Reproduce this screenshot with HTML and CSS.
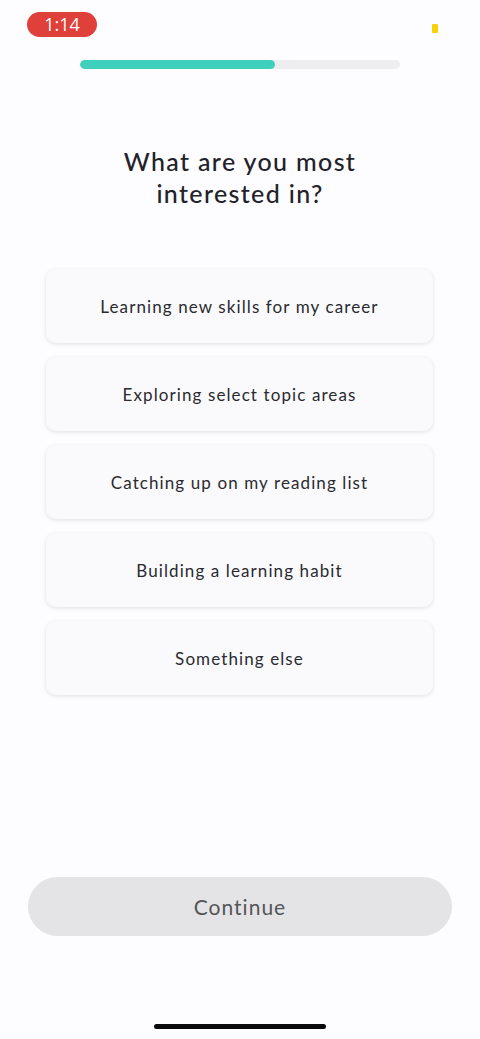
FILE: index.html
```html
<!DOCTYPE html>
<html>
<head>
<meta charset="utf-8">
<link rel="stylesheet" href="styles.css">
</head>
<body>
<div class="screen">
  <div class="status">
    <span class="time">1:14</span>
    <span class="dot"></span>
  </div>
  <div class="progress"><div class="fill" style="width:61%"></div></div>
  <h1 class="title">What are you most<br>interested in?</h1>
  <div class="options">
    <div class="card">Learning new skills for my career</div>
    <div class="card">Exploring select topic areas</div>
    <div class="card">Catching up on my reading list</div>
    <div class="card">Building a learning habit</div>
    <div class="card">Something else</div>
  </div>
  <div class="spacer"></div>
  <div class="cta">Continue</div>
  <div class="home"></div>
</div>
</body>
</html>
```
FILE: styles.css
```css
html, body { margin: 0; padding: 0; }
body {
  background: #fdfcfe;
  font-family: Lato, "Open Sans", sans-serif;
  color: #22222a;
}
.screen {
  width: 480px;
  height: 1039px;
  display: flex;
  flex-direction: column;
  box-sizing: border-box;
}
.status {
  height: 50px;
  display: flex;
  align-items: flex-start;
  justify-content: space-between;
  padding: 12px 42px 0 27px;
  box-sizing: border-box;
}
.time {
  width: 70px;
  height: 25px;
  border-radius: 13px;
  background: #e0403a;
  color: #fff;
  font-family: "Open Sans", sans-serif;
  font-size: 18px;
  line-height: 25px;
  text-align: center;
  font-weight: 500;
}
.dot {
  width: 6px;
  height: 9px;
  background: #f5d20a;
  margin-top: 12px;
  border-radius: 1px;
}
.progress {
  margin: 10px 80px 0 80px;
  height: 9px;
  border-radius: 5px;
  background: #eeeef0;
  overflow: hidden;
}
.fill {
  height: 100%;
  background: #3ecfbd;
  border-radius: 5px;
}
.title {
  margin: 76px 0 0;
  text-align: center;
  font-size: 25px;
  font-weight: 500;
  line-height: 32px;
  letter-spacing: 1.35px;
  color: #22222a;
}
.options {
  margin: 60px 47px 0 46px;
  display: flex;
  flex-direction: column;
  gap: 14px;
}
.card {
  height: 74px;
  background: #fafafc;
  border-radius: 10px;
  box-shadow: 0 1px 4px rgba(0,0,0,0.12);
  display: flex;
  align-items: center;
  justify-content: center;
  font-size: 17px;
  letter-spacing: 1.1px;
  color: #2a2a30;
}
.spacer { flex: 1; }
.cta {
  margin: 0 28px;
  height: 59px;
  border-radius: 30px;
  background: #e4e4e6;
  color: #55555a;
  font-size: 21px;
  letter-spacing: 1px;
  display: flex;
  align-items: center;
  justify-content: center;
}
.home {
  margin: 88px auto 10px;
  width: 172px;
  height: 5px;
  border-radius: 3px;
  background: #0a0a0a;
}
```
